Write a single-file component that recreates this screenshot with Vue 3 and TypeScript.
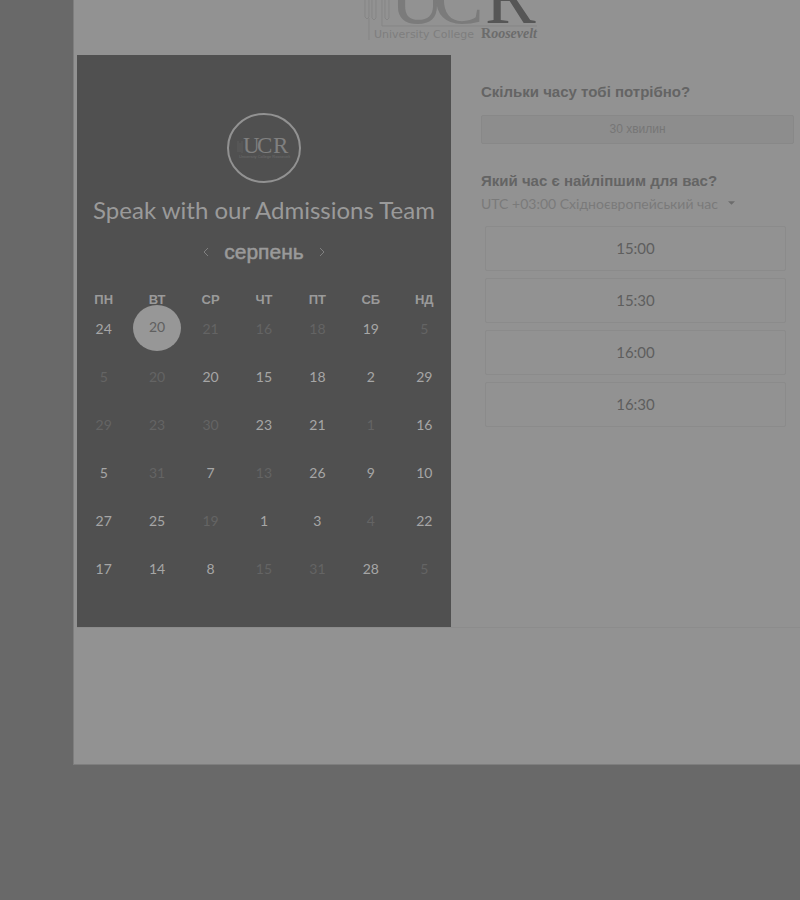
<script setup lang="ts">
import { ref } from 'vue'

interface Day {
  label: number
  open: boolean
}

const weekdays: string[] = ['ПН', 'ВТ', 'СР', 'ЧТ', 'ПТ', 'СБ', 'НД']

const day = (label: number, open = true): Day => ({ label, open })

const weeks: Day[][] = [
  [day(24), day(20), day(21, false), day(16, false), day(18, false), day(19), day(5, false)],
  [day(5, false), day(20, false), day(20), day(15), day(18), day(2), day(29)],
  [day(29, false), day(23, false), day(30, false), day(23), day(21), day(1, false), day(16)],
  [day(5), day(31, false), day(7), day(13, false), day(26), day(9), day(10)],
  [day(27), day(25), day(19, false), day(1), day(3), day(4, false), day(22)],
  [day(17), day(14), day(8), day(15, false), day(31, false), day(28), day(5, false)],
]

const times: string[] = ['15:00', '15:30', '16:00', '16:30']

const selected = ref('0-1')
const zone = ref('eet')
</script>

<template>
  <div class="backdrop">
    <main class="dialog">
      <header class="brand">
        <svg class="brand-logo" viewBox="0 0 180 55" role="img" aria-label="University College Roosevelt">
          <g class="tower">
            <path d="M2 0V17L4 19L6 17V0M6 18V40M9 0V18L11 20L13 18V0M19 0V26H174M22 0V18L24 20L26 18V0" />
          </g>
          <text class="initial" x="27" y="23">U</text>
          <text class="initial" x="70" y="23">C</text>
          <text class="initial strong" x="122" y="23">R</text>
          <text class="caption" x="11" y="38">University College</text>
          <text class="caption-name" x="118" y="38">R<tspan class="slanted">oosevelt</tspan></text>
        </svg>
      </header>

      <div class="content">
        <section class="calendar">
          <svg class="badge" viewBox="0 0 76 72" role="img" aria-label="UCR">
            <ellipse cx="38" cy="36" rx="36" ry="34" />
            <path d="M12 29V40M14 31V40M16 29V41" />
            <text class="badge-text" x="17" y="41">U</text>
            <text class="badge-text" x="31" y="41">C</text>
            <text class="badge-text" x="47" y="41">R</text>
            <text class="badge-caption" x="13" y="46">University College Roosevelt</text>
          </svg>
          <h1>Speak with our Admissions Team</h1>
          <div class="month">
            <button type="button" aria-label="Попередній місяць">
              <svg viewBox="0 0 8 10"><path d="M6 1L2 5L6 9" /></svg>
            </button>
            <h2>серпень</h2>
            <button type="button" aria-label="Наступний місяць">
              <svg viewBox="0 0 8 10"><path d="M2 1L6 5L2 9" /></svg>
            </button>
          </div>
          <table>
            <thead>
              <tr>
                <th v-for="name in weekdays" :key="name" scope="col">{{ name }}</th>
              </tr>
            </thead>
            <tbody>
              <tr v-for="(week, w) in weeks" :key="w">
                <td v-for="(d, i) in week" :key="i">
                  <button
                    type="button"
                    class="day"
                    :class="{ selected: selected === `${w}-${i}` }"
                    :disabled="!d.open"
                    @click="selected = `${w}-${i}`"
                  >{{ d.label }}</button>
                </td>
              </tr>
            </tbody>
          </table>
        </section>

        <section class="options">
          <h3>Скільки часу тобі потрібно?</h3>
          <button type="button" class="duration">30 хвилин</button>
          <h3><label for="zone">Який час є найліпшим для вас?</label></h3>
          <div class="zone">
            <select id="zone" v-model="zone">
              <option value="eet">UTC +03:00 Східноєвропейський час</option>
            </select>
            <svg viewBox="0 0 8 4"><path d="M0 0H8L4 4Z" /></svg>
          </div>
          <ul class="times">
            <li v-for="time in times" :key="time">
              <button type="button">{{ time }}</button>
            </li>
          </ul>
        </section>
      </div>
    </main>
  </div>
</template>

<style>
body {
  margin: 0;
  background: #696969;
}
</style>

<style scoped>
.backdrop {
  box-sizing: border-box;
  min-height: 100vh;
  padding-left: 73px;
  background: #696969;
  font-family: Lato, "Liberation Sans", sans-serif;
}

.dialog {
  box-sizing: border-box;
  padding-bottom: 137px;
  background: #929292;
  box-shadow: inset 1px -1px #7e7e7e;
}

.brand {
  display: flex;
  justify-content: center;
  height: 55px;
  padding-left: 32px;
}

.brand-logo {
  width: 180px;
  height: 55px;
}

.tower path {
  fill: none;
  stroke: #858585;
}

.initial {
  font: 76px "Liberation Serif", serif;
  fill: #7b7b7b;
}

.strong {
  fill: #565656;
}

.caption {
  font: 11px "DejaVu Sans", sans-serif;
  fill: #7e7e7e;
}

.caption-name {
  font: bold 14px "Liberation Serif", serif;
  fill: #6c6c6c;
}

.slanted {
  font-style: italic;
}

.content {
  display: grid;
  grid-template-columns: 374fr 349fr;
  margin-left: 4px;
  border-bottom: 1px solid #8c8c8c;
}

.calendar {
  display: flex;
  flex-direction: column;
  align-items: center;
  padding: 57px 0 35px;
  background: #505050;
  color: #9a9a9a;
}

.badge {
  width: 76px;
  height: 72px;
}

.badge ellipse {
  fill: none;
  stroke: #929292;
  stroke-width: 2;
}

.badge path {
  fill: none;
  stroke: #5c5c5c;
}

.badge-text {
  font: 23px "Liberation Serif", serif;
  fill: #808080;
}

.badge-caption {
  font: 4px "Liberation Sans", sans-serif;
  fill: #6c6c6c;
}

h1,
h2,
h3 {
  margin: 0;
}

h1 {
  margin-top: 11px;
  font-size: 24px;
  font-weight: 400;
  line-height: 30px;
  white-space: nowrap;
}

.month {
  display: flex;
  align-items: center;
  gap: 13px;
  margin-top: 13px;
}

.month button {
  display: flex;
  padding: 0;
  border: 0;
  background: none;
}

.month svg {
  width: 10px;
  height: 10px;
  fill: none;
  stroke: #808080;
}

h2 {
  font: 21px/28px "Liberation Sans", sans-serif;
  -webkit-text-stroke: 0.5px currentColor;
}

table {
  width: 100%;
  margin-top: 30px;
  border-collapse: collapse;
  table-layout: fixed;
}

th {
  height: 8px;
  padding: 0;
  font: bold 13px/8px "Liberation Sans", sans-serif;
}

td {
  height: 48px;
  padding: 0;
  text-align: center;
}

.day {
  width: 48px;
  height: 46px;
  padding: 0;
  border: 0;
  border-radius: 50%;
  background: none;
  color: #a6a6a6;
  font: 14px Lato, sans-serif;
}

.day:disabled {
  color: #646464;
}

.day.selected {
  padding-bottom: 3px;
  background: #979797;
  color: #606060;
}

.options {
  padding: 27px 6px 0 30px;
}

h3 {
  color: #646464;
  font: bold 15px/20px "Liberation Sans", sans-serif;
}

.duration {
  display: block;
  width: 100%;
  height: 29px;
  margin: 13px 0 27px;
  padding-bottom: 3px;
  border: 1px solid #888888;
  border-radius: 2px;
  background: #8d8d8d;
  color: #767676;
  font: 12px "Liberation Sans", sans-serif;
}

.zone {
  display: flex;
  align-items: center;
  gap: 10px;
  height: 24px;
}

.zone select {
  padding: 0;
  border: 0;
  appearance: none;
  background: none;
  color: #7a7a7a;
  font: 14px Lato, sans-serif;
}

.zone svg {
  width: 7px;
  height: 4px;
  fill: #6c6c6c;
}

.times {
  display: grid;
  gap: 7px;
  margin: 11px 8px 0 4px;
  padding: 0;
  list-style: none;
}

.times button {
  display: block;
  width: 100%;
  height: 45px;
  padding-bottom: 3px;
  border: 1px solid #8b8b8b;
  border-radius: 2px;
  background: #929292;
  color: #5e5e5e;
  font: 15px Lato, sans-serif;
}
</style>
